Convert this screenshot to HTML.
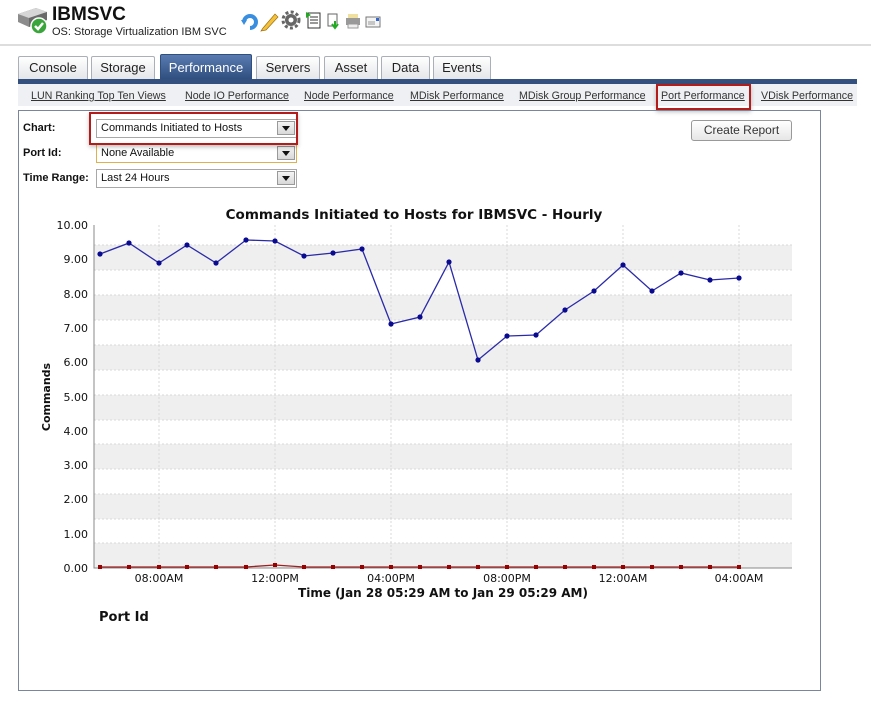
<!DOCTYPE html>
<html><head><style>
body{margin:0;width:871px;height:707px;background:#fff;font-family:"Liberation Sans",Arial,sans-serif;position:relative;overflow:hidden}
.a{position:absolute}
.tab{position:absolute;top:56px;height:22px;border:1px solid #a9b0ba;border-bottom:none;background:linear-gradient(#fff,#e4e6e9);font-size:13px;color:#222;text-align:center;line-height:22px;border-radius:2px 2px 0 0}
.tab.act{background:linear-gradient(#5a7bb0,#2f4f80);color:#fff;border-color:#2f4f80;height:24px;top:54px;line-height:26px}
.sub{position:absolute;top:90px;font-size:10.7px;color:#333;text-decoration:underline}
.lbl{position:absolute;left:23px;font-size:11px;font-weight:bold;color:#111}
.sel{position:absolute;left:96px;width:199px;height:17px;border:1px solid #a8a8a8;font-size:11px;line-height:17px;text-indent:4px;color:#111;background:#fff}
.sel i{position:absolute;right:1px;top:1px;width:18px;height:14px;background:linear-gradient(#f4f4f4,#d8d8d8);border:1px solid #999;box-sizing:border-box}
.sel i:after{content:"";position:absolute;left:4px;top:4px;border-left:4px solid transparent;border-right:4px solid transparent;border-top:5px solid #111}
</style></head><body>
<svg class="a" style="left:16px;top:6px" width="34" height="30" viewBox="0 0 34 30">
<path d="M2 8 L20 2 L31 6 L31 14 L13 21 L2 16Z" fill="#8c8c8c"/>
<path d="M2 8 L20 2 L31 6 L13 12Z" fill="#d6d6d6"/>
<path d="M13 12 L31 6 L31 14 L13 21Z" fill="#6a6a6a"/>
<circle cx="23" cy="20" r="8" fill="#3aa53a" stroke="#fff" stroke-width="1.5"/>
<path d="M19 20 L22 23 L27 17" stroke="#fff" stroke-width="2.5" fill="none"/>
</svg>
<div class="a" style="left:52px;top:4px;font-size:19px;font-weight:bold;color:#111">IBMSVC</div>
<div class="a" style="left:52px;top:26px;font-size:11px;color:#222">OS: Storage Virtualization IBM SVC</div>
<svg class="a" style="left:240px;top:10px" width="145" height="22">
<path d="M4 12 A6 6 0 1 1 10 18" stroke="#3a8ee0" stroke-width="4" fill="none"/><path d="M1 10 L7 10 L4 15Z" fill="#3a8ee0"/>
<path d="M23 18 L35 4 L38 7 L26 20 L21 21Z" fill="#f3c23a" stroke="#a07010" stroke-width=".7"/>
<circle cx="51" cy="10" r="6" fill="#666"/><circle cx="51" cy="10" r="8" fill="none" stroke="#666" stroke-width="3" stroke-dasharray="3 2.3"/><circle cx="51" cy="10" r="2.5" fill="#fff"/>
<rect x="68" y="3" width="12" height="15" fill="#fff" stroke="#333"/><path d="M70 7h8M70 10h8M70 13h8" stroke="#333"/><path d="M66 2 L71 5 L66 8Z" fill="#2a2"/>
<rect x="88" y="4" width="9" height="12" fill="#fff" stroke="#666"/><path d="M95 11 v6 M92 14 l3 4 l3-4" stroke="#2a2" stroke-width="2" fill="none"/>
<rect x="108" y="4" width="10" height="5" fill="#f0e0a0"/><rect x="106" y="8" width="14" height="7" fill="#999"/><rect x="108" y="14" width="10" height="4" fill="#eee" stroke="#999"/>
<rect x="126" y="7" width="14" height="10" fill="#f4f4f4" stroke="#777"/><path d="M128 12h7M128 14h7" stroke="#999"/><rect x="136" y="8" width="3" height="3" fill="#36c"/>
</svg>
<div class="a" style="left:0;top:44px;width:871px;height:2px;background:#ddd"></div>
<div class="tab" style="left:18px;width:68px">Console</div>
<div class="tab" style="left:91px;width:62px">Storage</div>
<div class="tab act" style="left:160px;width:90px">Performance</div>
<div class="tab" style="left:256px;width:62px">Servers</div>
<div class="tab" style="left:324px;width:52px">Asset</div>
<div class="tab" style="left:381px;width:47px">Data</div>
<div class="tab" style="left:433px;width:56px">Events</div>
<div class="a" style="left:18px;top:79px;width:839px;height:5px;background:#34507e"></div>
<div class="a" style="left:18px;top:84px;width:839px;height:22px;background:#eef0f3"></div>
<div class="sub" style="left:31px">LUN Ranking Top Ten Views</div>
<div class="sub" style="left:185px">Node IO Performance</div>
<div class="sub" style="left:304px">Node Performance</div>
<div class="sub" style="left:410px">MDisk Performance</div>
<div class="sub" style="left:519px">MDisk Group Performance</div>
<div class="sub" style="left:661px">Port Performance</div>
<div class="sub" style="left:761px">VDisk Performance</div>
<div class="a" style="left:656px;top:84px;width:95px;height:26px;border:2px solid #b41b1b;box-sizing:border-box;box-shadow:0 2px 4px rgba(0,0,0,.25)"></div>
<div class="a" style="left:18px;top:110px;width:801px;height:579px;border:1px solid #7a8699"></div>
<div class="lbl" style="top:122px">Chart:</div>
<div class="lbl" style="top:147px">Port Id:</div>
<div class="lbl" style="top:172px">Time Range:</div>
<div class="sel" style="top:119px">Commands Initiated to Hosts<i></i></div>
<div class="sel" style="top:144px;border-color:#e0b050">None Available<i></i></div>
<div class="sel" style="top:169px">Last 24 Hours<i></i></div>
<div class="a" style="left:89px;top:112px;width:209px;height:33px;border:2px solid #b41b1b;box-sizing:border-box;box-shadow:0 2px 4px rgba(0,0,0,.25)"></div>
<div class="a" style="left:691px;top:120px;width:99px;height:19px;border:1px solid #999;border-radius:3px;background:linear-gradient(#fff,#e6e6e6);font-size:12px;color:#333;text-align:center;line-height:19px">Create Report</div>
<svg class="a" style="left:0;top:0" width="871" height="707" font-family="DejaVu Sans,Verdana,sans-serif">
<text x="414" y="219" text-anchor="middle" font-size="13.5" font-weight="bold" fill="#111">Commands Initiated to Hosts for IBMSVC - Hourly</text>
<g fill="#efefef">
<rect x="94" y="245" width="698" height="25"/><rect x="94" y="295" width="698" height="25"/><rect x="94" y="345" width="698" height="25"/><rect x="94" y="395" width="698" height="25"/><rect x="94" y="444" width="698" height="25"/><rect x="94" y="494" width="698" height="25"/><rect x="94" y="543" width="698" height="25"/>
</g>
<g stroke="#d8d8d8" stroke-dasharray="2 2">
<path d="M94 245H792M94 270H792M94 295H792M94 320H792M94 345H792M94 370H792M94 395H792M94 420H792M94 444H792M94 469H792M94 494H792M94 519H792M94 543H792"/>
<path d="M159 225V568M275 225V568M391 225V568M507 225V568M623 225V568M739 225V568"/>
</g>
<path d="M94 225V568H792" stroke="#888" fill="none"/>
<g font-size="11" fill="#111" text-anchor="end">
<text x="88" y="229">10.00</text><text x="88" y="263">9.00</text><text x="88" y="298">8.00</text><text x="88" y="332">7.00</text><text x="88" y="366">6.00</text><text x="88" y="401">5.00</text><text x="88" y="435">4.00</text><text x="88" y="469">3.00</text><text x="88" y="503">2.00</text><text x="88" y="538">1.00</text><text x="88" y="572">0.00</text>
</g>
<g font-size="11" fill="#111" text-anchor="middle">
<text x="159" y="582">08:00AM</text><text x="275" y="582">12:00PM</text><text x="391" y="582">04:00PM</text><text x="507" y="582">08:00PM</text><text x="623" y="582">12:00AM</text><text x="739" y="582">04:00AM</text>
</g>
<text x="443" y="597" text-anchor="middle" font-size="12" font-weight="bold" fill="#111">Time (Jan 28 05:29 AM to Jan 29 05:29 AM)</text>
<text x="50" y="397" transform="rotate(-90 50 397)" text-anchor="middle" font-size="11" font-weight="bold" fill="#111">Commands</text>
<text x="99" y="621" font-size="13" font-weight="bold" fill="#111">Port Id</text>
<polyline fill="none" stroke="#2a2aa8" stroke-width="1.3" points="100,254 129,243 159,263 187,245 216,263 246,240 275,241 304,256 333,253 362,249 391,324 420,317 449,262 478,360 507,336 536,335 565,310 594,291 623,265 652,291 681,273 710,280 739,278"/>
<g fill="#0a0a90">
<circle cx="100" cy="254" r="2.6"/><circle cx="129" cy="243" r="2.6"/><circle cx="159" cy="263" r="2.6"/><circle cx="187" cy="245" r="2.6"/><circle cx="216" cy="263" r="2.6"/><circle cx="246" cy="240" r="2.6"/><circle cx="275" cy="241" r="2.6"/><circle cx="304" cy="256" r="2.6"/><circle cx="333" cy="253" r="2.6"/><circle cx="362" cy="249" r="2.6"/><circle cx="391" cy="324" r="2.6"/><circle cx="420" cy="317" r="2.6"/><circle cx="449" cy="262" r="2.6"/><circle cx="478" cy="360" r="2.6"/><circle cx="507" cy="336" r="2.6"/><circle cx="536" cy="335" r="2.6"/><circle cx="565" cy="310" r="2.6"/><circle cx="594" cy="291" r="2.6"/><circle cx="623" cy="265" r="2.6"/><circle cx="652" cy="291" r="2.6"/><circle cx="681" cy="273" r="2.6"/><circle cx="710" cy="280" r="2.6"/><circle cx="739" cy="278" r="2.6"/>
</g>
<polyline fill="none" stroke="#a02020" stroke-width="1.3" points="100,567 246,567 275,565 304,567 739,567"/>
<g fill="#900">
<rect x="98" y="565" width="4" height="4"/><rect x="127" y="565" width="4" height="4"/><rect x="157" y="565" width="4" height="4"/><rect x="185" y="565" width="4" height="4"/><rect x="214" y="565" width="4" height="4"/><rect x="244" y="565" width="4" height="4"/><rect x="273" y="563" width="4" height="4"/><rect x="302" y="565" width="4" height="4"/><rect x="331" y="565" width="4" height="4"/><rect x="360" y="565" width="4" height="4"/><rect x="389" y="565" width="4" height="4"/><rect x="418" y="565" width="4" height="4"/><rect x="447" y="565" width="4" height="4"/><rect x="476" y="565" width="4" height="4"/><rect x="505" y="565" width="4" height="4"/><rect x="534" y="565" width="4" height="4"/><rect x="563" y="565" width="4" height="4"/><rect x="592" y="565" width="4" height="4"/><rect x="621" y="565" width="4" height="4"/><rect x="650" y="565" width="4" height="4"/><rect x="679" y="565" width="4" height="4"/><rect x="708" y="565" width="4" height="4"/><rect x="737" y="565" width="4" height="4"/>
</g>
</svg>
</body></html>
